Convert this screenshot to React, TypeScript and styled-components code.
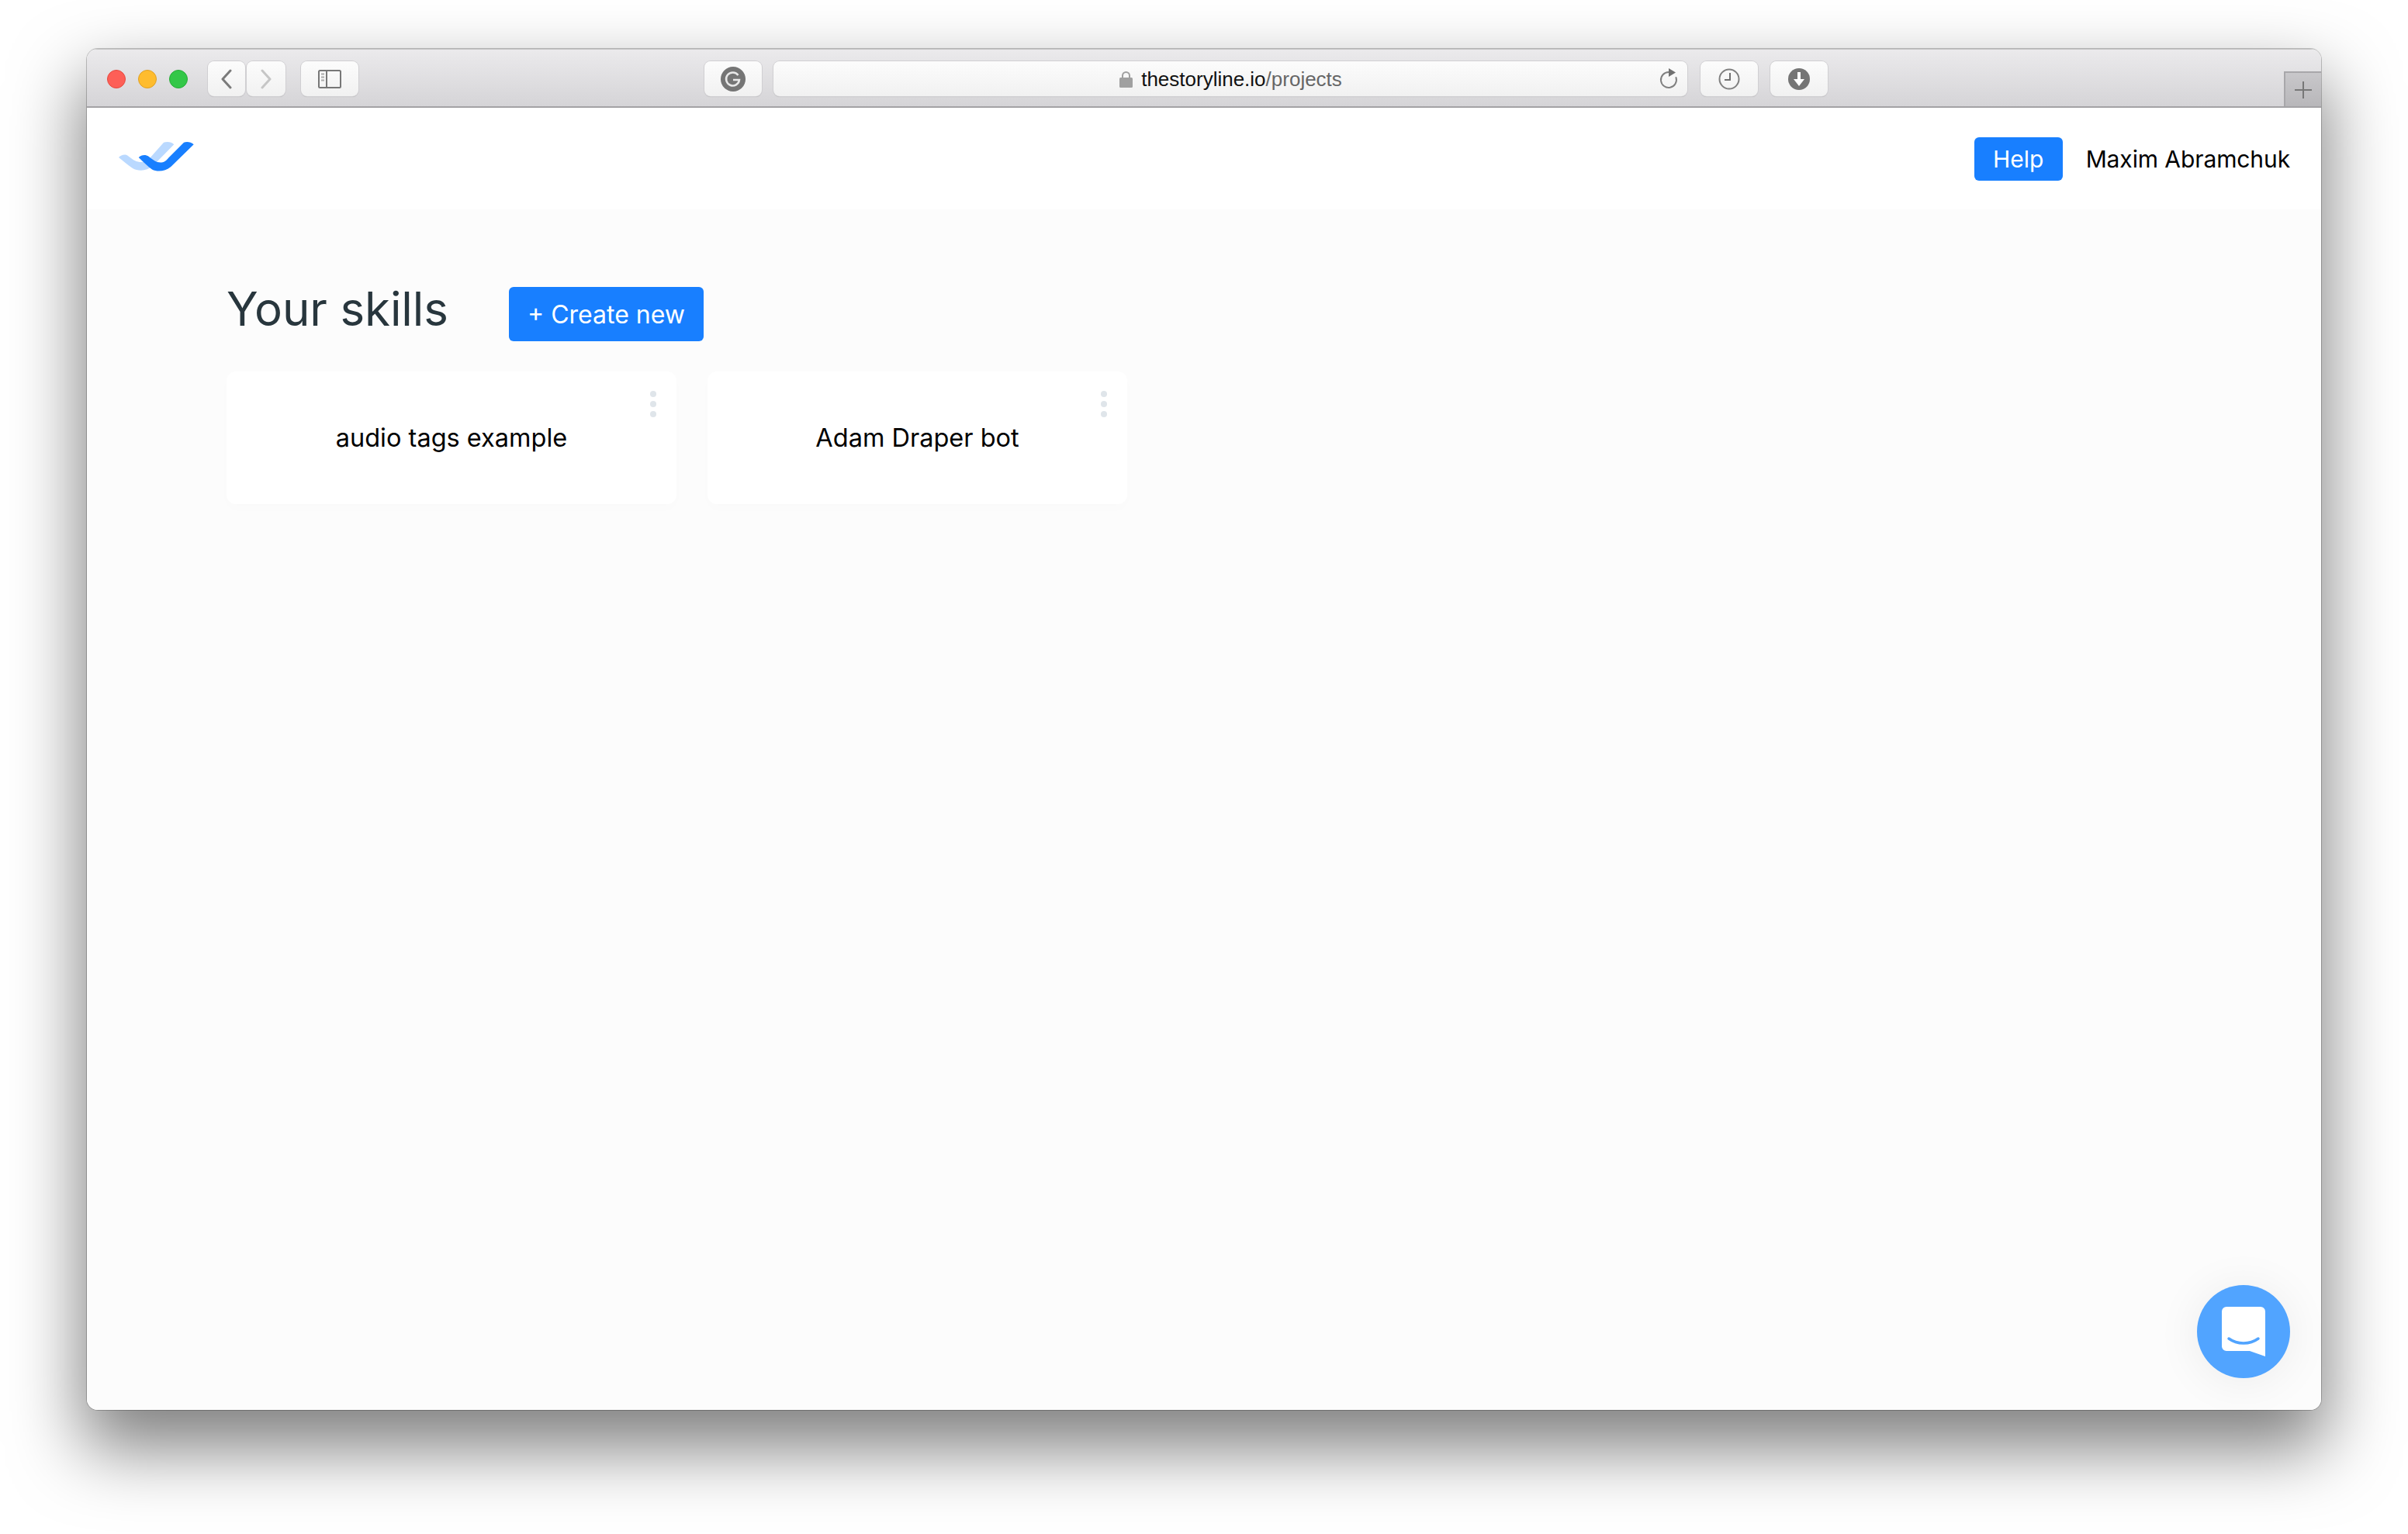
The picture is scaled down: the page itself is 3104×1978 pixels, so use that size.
import styled, { createGlobalStyle } from 'styled-components';

const GlobalStyle = createGlobalStyle`
  html, body { margin: 0; padding: 0; background: #fff; }
  * { box-sizing: border-box; }
  #root { font-family: Inter, "Open Sans", sans-serif; }
`;

const Page = styled.div`
  width: 3104px;
  height: 1978px;
  padding: 63px 112px 160px;
  overflow: hidden;
  background: #fff;
`;

const Browser = styled.div`
  position: relative;
  display: flex;
  flex-direction: column;
  height: 100%;
  border-radius: 14px;
  overflow: hidden;
`;

const Frame = styled.div`
  height: 100%;
  border-radius: 14px;
  box-shadow: 0 44px 90px 6px rgba(0, 0, 0, 0.5), 0 0 0 1px rgba(0, 0, 0, 0.22);
`;

const Toolbar = styled.div`
  flex: none;
  display: flex;
  height: 76px;
  padding: 15px 0 0 26px;
  background: linear-gradient(#ebeaec, #d5d4d7);
  border-top: 1px solid #c4c4c4;
  border-bottom: 2px solid #a3a2a5;
`;

const Lights = styled.div`
  display: flex;
  gap: 16px;
  margin: 11px 26px 0 0;
`;

const Light = styled.span<{ $fill: string; $edge: string }>`
  width: 24px;
  height: 24px;
  border-radius: 50%;
  background: ${p => p.$fill};
  border: 1px solid ${p => p.$edge};
`;

const ToolButton = styled.div<{ $width: number; $gapLeft?: number }>`
  flex: none;
  display: flex;
  align-items: center;
  justify-content: center;
  width: ${p => p.$width}px;
  height: 45px;
  margin-left: ${p => p.$gapLeft ?? 0}px;
  border-radius: 8px;
  background: linear-gradient(#fcfcfc, #f1f1f1);
  box-shadow: 0 0 0 1px #d0cfd2, 0 1px 1px rgba(0, 0, 0, 0.18);
`;

const Address = styled.div`
  position: relative;
  flex: none;
  display: flex;
  align-items: center;
  justify-content: center;
  gap: 11px;
  width: 1178px;
  height: 45px;
  margin-left: 15px;
  padding-left: 1px;
  border-radius: 8px;
  background: linear-gradient(#fcfcfc, #f1f1f1);
  box-shadow: 0 0 0 1px #d0cfd2, 0 1px 1px rgba(0, 0, 0, 0.18);
`;

const Url = styled.span`
  padding-top: 1px;
  font-family: "Liberation Sans", Arial, sans-serif;
  font-size: 26px;
  color: #111;
`;

const UrlPath = styled.span`
  color: #666;
`;

const Reload = styled.svg`
  position: absolute;
  right: 12px;
  top: 8px;
`;

const NewTab = styled.div`
  flex: none;
  align-self: flex-end;
  display: flex;
  align-items: center;
  justify-content: center;
  width: 48px;
  height: 45px;
  margin-left: auto;
  background: linear-gradient(#c8c7ca, #b8b7ba);
  border-left: 2px solid #a8a7aa;
  border-top: 2px solid #a8a7aa;
`;

const Nav = styled.header`
  flex: none;
  display: flex;
  align-items: center;
  justify-content: space-between;
  height: 131px;
  padding: 0 40px 0 41px;
  background: #fff;
`;

const Logo = styled.svg`
  display: block;
  margin-top: -5px;
`;

const NavRight = styled.div`
  display: flex;
  align-items: center;
  gap: 30px;
  margin-top: 1px;
`;

const HelpButton = styled.button`
  width: 114px;
  height: 56px;
  padding: 0;
  border: 0;
  border-radius: 6px;
  background: #187fff;
  color: #fff;
  font: 400 30px Inter, sans-serif;
`;

const UserName = styled.span`
  font-size: 30px;
  letter-spacing: -0.1px;
  color: #000;
`;

const Content = styled.main`
  flex: 1;
  padding: 100px 180px 0;
  background: #fcfcfc;
`;

const HeadingRow = styled.div`
  display: flex;
  align-items: flex-start;
  gap: 81px;
  height: 109px;
`;

const Heading = styled.h1`
  width: 283px;
  margin: -2px 0 0;
  font-size: 60px;
  font-weight: 400;
  line-height: 60px;
  letter-spacing: -0.1px;
  white-space: nowrap;
  color: #28363d;
`;

const CreateButton = styled.button`
  width: 251px;
  height: 70px;
  padding: 0;
  border: 0;
  border-radius: 6px;
  background: #187fff;
  color: #fff;
  font: 400 32px Inter, sans-serif;
`;

const Cards = styled.div`
  display: flex;
  gap: 40px;
`;

const Card = styled.article<{ $width: number }>`
  position: relative;
  display: flex;
  align-items: center;
  justify-content: center;
  width: ${p => p.$width}px;
  height: 171px;
  border-radius: 12px;
  background: #fff;
  font-size: 32.5px;
  color: #000;
  box-shadow: 0 6px 16px rgba(0, 0, 0, 0.012);
`;

const CardMenu = styled.div`
  position: absolute;
  top: 25px;
  right: 26px;
  display: flex;
  flex-direction: column;
  gap: 5px;
`;

const MenuDot = styled.span`
  width: 8px;
  height: 8px;
  border-radius: 50%;
  background: #dfe5ea;
`;

const ChatBubble = styled.div`
  position: absolute;
  right: 40px;
  bottom: 41px;
  display: flex;
  align-items: center;
  justify-content: center;
  width: 120px;
  height: 120px;
  border-radius: 50%;
  background: #51a4ff;
  box-shadow: 0 4px 60px rgba(0, 0, 0, 0.07);
`;

const Skill = ({ name, width }: { name: string; width: number }) => (
  <Card $width={width}>
    {name}
    <CardMenu>
      <MenuDot />
      <MenuDot />
      <MenuDot />
    </CardMenu>
  </Card>
);

export default function App() {
  return (
    <Page>
      <GlobalStyle />
      <Frame>
        <Browser>
          <Toolbar>
            <Lights>
              <Light $fill="#fd5f57" $edge="#e5493f" />
              <Light $fill="#febc2e" $edge="#dfa024" />
              <Light $fill="#33c748" $edge="#27ab37" />
            </Lights>
            <ToolButton $width={48}>
              <svg width="16" height="26" viewBox="0 0 16 26" fill="none">
                <path d="M13 2 3 13l10 11" stroke="#7b7b7b" strokeWidth="3" strokeLinecap="round" strokeLinejoin="round" />
              </svg>
            </ToolButton>
            <ToolButton $width={50} $gapLeft={2}>
              <svg width="16" height="26" viewBox="0 0 16 26" fill="none">
                <path d="m3 2 10 11L3 24" stroke="#c6c6c6" strokeWidth="3" strokeLinecap="round" strokeLinejoin="round" />
              </svg>
            </ToolButton>
            <ToolButton $width={74} $gapLeft={20}>
              <svg width="30" height="24" viewBox="0 0 30 24" fill="none">
                <rect x="1" y="1" width="28" height="22" rx="1.5" stroke="#777" strokeWidth="2" />
                <path d="M11 1v22" stroke="#777" strokeWidth="2" />
                <path d="M4 5.500h4M4 9.500h4M4 13.500h4" stroke="#aaa" strokeWidth="2" />
              </svg>
            </ToolButton>
            <ToolButton $width={74} $gapLeft={446}>
              <svg width="32" height="32" viewBox="0 0 32 32" fill="none">
                <circle cx="16" cy="16" r="16" fill="#757575" />
                <path d="M22.500 11a8.500 8.500 0 1 0 1.500 6h-8" stroke="#e8e8e8" strokeWidth="2.500" />
              </svg>
            </ToolButton>
            <Address>
              <svg width="17" height="22" viewBox="0 0 17 22" fill="none">
                <path d="M4 10V6.500a4.500 4.500 0 0 1 9 0V10" stroke="#a0a0a0" strokeWidth="2" />
                <rect y="9" width="17" height="13" rx="1.500" fill="#a0a0a0" />
              </svg>
              <Url>
                thestoryline.io<UrlPath>/projects</UrlPath>
              </Url>
              <Reload width="24" height="28" viewBox="0 0 24 28" fill="none">
                <path d="M12 6A10 10 0 1 0 21.500 13" stroke="#808080" strokeWidth="2" strokeLinecap="round" />
                <path d="M12 1v11l9-5.500z" fill="#707070" />
              </Reload>
            </Address>
            <ToolButton $width={74} $gapLeft={17}>
              <svg width="28" height="28" viewBox="0 0 28 28" fill="none">
                <circle cx="14" cy="14" r="12.500" stroke="#808080" strokeWidth="2" />
                <path d="M15 6v9H8" stroke="#707070" strokeWidth="2" />
              </svg>
            </ToolButton>
            <ToolButton $width={74} $gapLeft={16}>
              <svg width="28" height="28" viewBox="0 0 28 28">
                <circle cx="14" cy="14" r="14" fill="#757575" />
                <path d="M12 5h4v9h5l-7 9-7-9h5z" fill="#fff" />
              </svg>
            </ToolButton>
            <NewTab>
              <svg width="24" height="24" viewBox="0 0 24 24" fill="none">
                <path d="M12 1v22M1 12h22" stroke="#777" strokeWidth="2" />
              </svg>
            </NewTab>
          </Toolbar>
          <Nav>
            <Logo width="97" height="38" viewBox="0 0 97 38">
              <path d="M0 20C3 17 8 15 12 18C17 22 21 25 27 26C33 26.500 37 24 40 21L58 .7C62-.3 68-.5 71.300 3.300L44 31C36 38 25 38 18 34C11 29 6 25 0 20Z" fill="#bad9ff" />
              <path d="M25.700 20C29 17 34 15.500 39 19C44 23 49 27 55 26.500C60 26 62 23 64 20.700L84 .7C87-.3 93-.5 96.700 3.300L67.300 32C60 38 50 39 43 35.500C37 31 31 25 25.700 20Z" fill="#187fff" />
            </Logo>
            <NavRight>
              <HelpButton>Help</HelpButton>
              <UserName>Maxim Abramchuk</UserName>
            </NavRight>
          </Nav>
          <Content>
            <HeadingRow>
              <Heading>Your skills</Heading>
              <CreateButton>+ Create new</CreateButton>
            </HeadingRow>
            <Cards>
              <Skill name="audio tags example" width={580} />
              <Skill name="Adam Draper bot" width={541} />
            </Cards>
          </Content>
          <ChatBubble>
            <svg width="56" height="64" viewBox="0 0 56 64">
              <path d="M6 0h44a6 6 0 0 1 6 6v58l-20-7H6a6 6 0 0 1-6-6V6a6 6 0 0 1 6-6z" fill="#fff" />
              <path d="M9 41c11 8 27 8 38 0" fill="none" stroke="#51a4ff" strokeWidth="3.500" strokeLinecap="round" />
            </svg>
          </ChatBubble>
        </Browser>
      </Frame>
    </Page>
  );
}
